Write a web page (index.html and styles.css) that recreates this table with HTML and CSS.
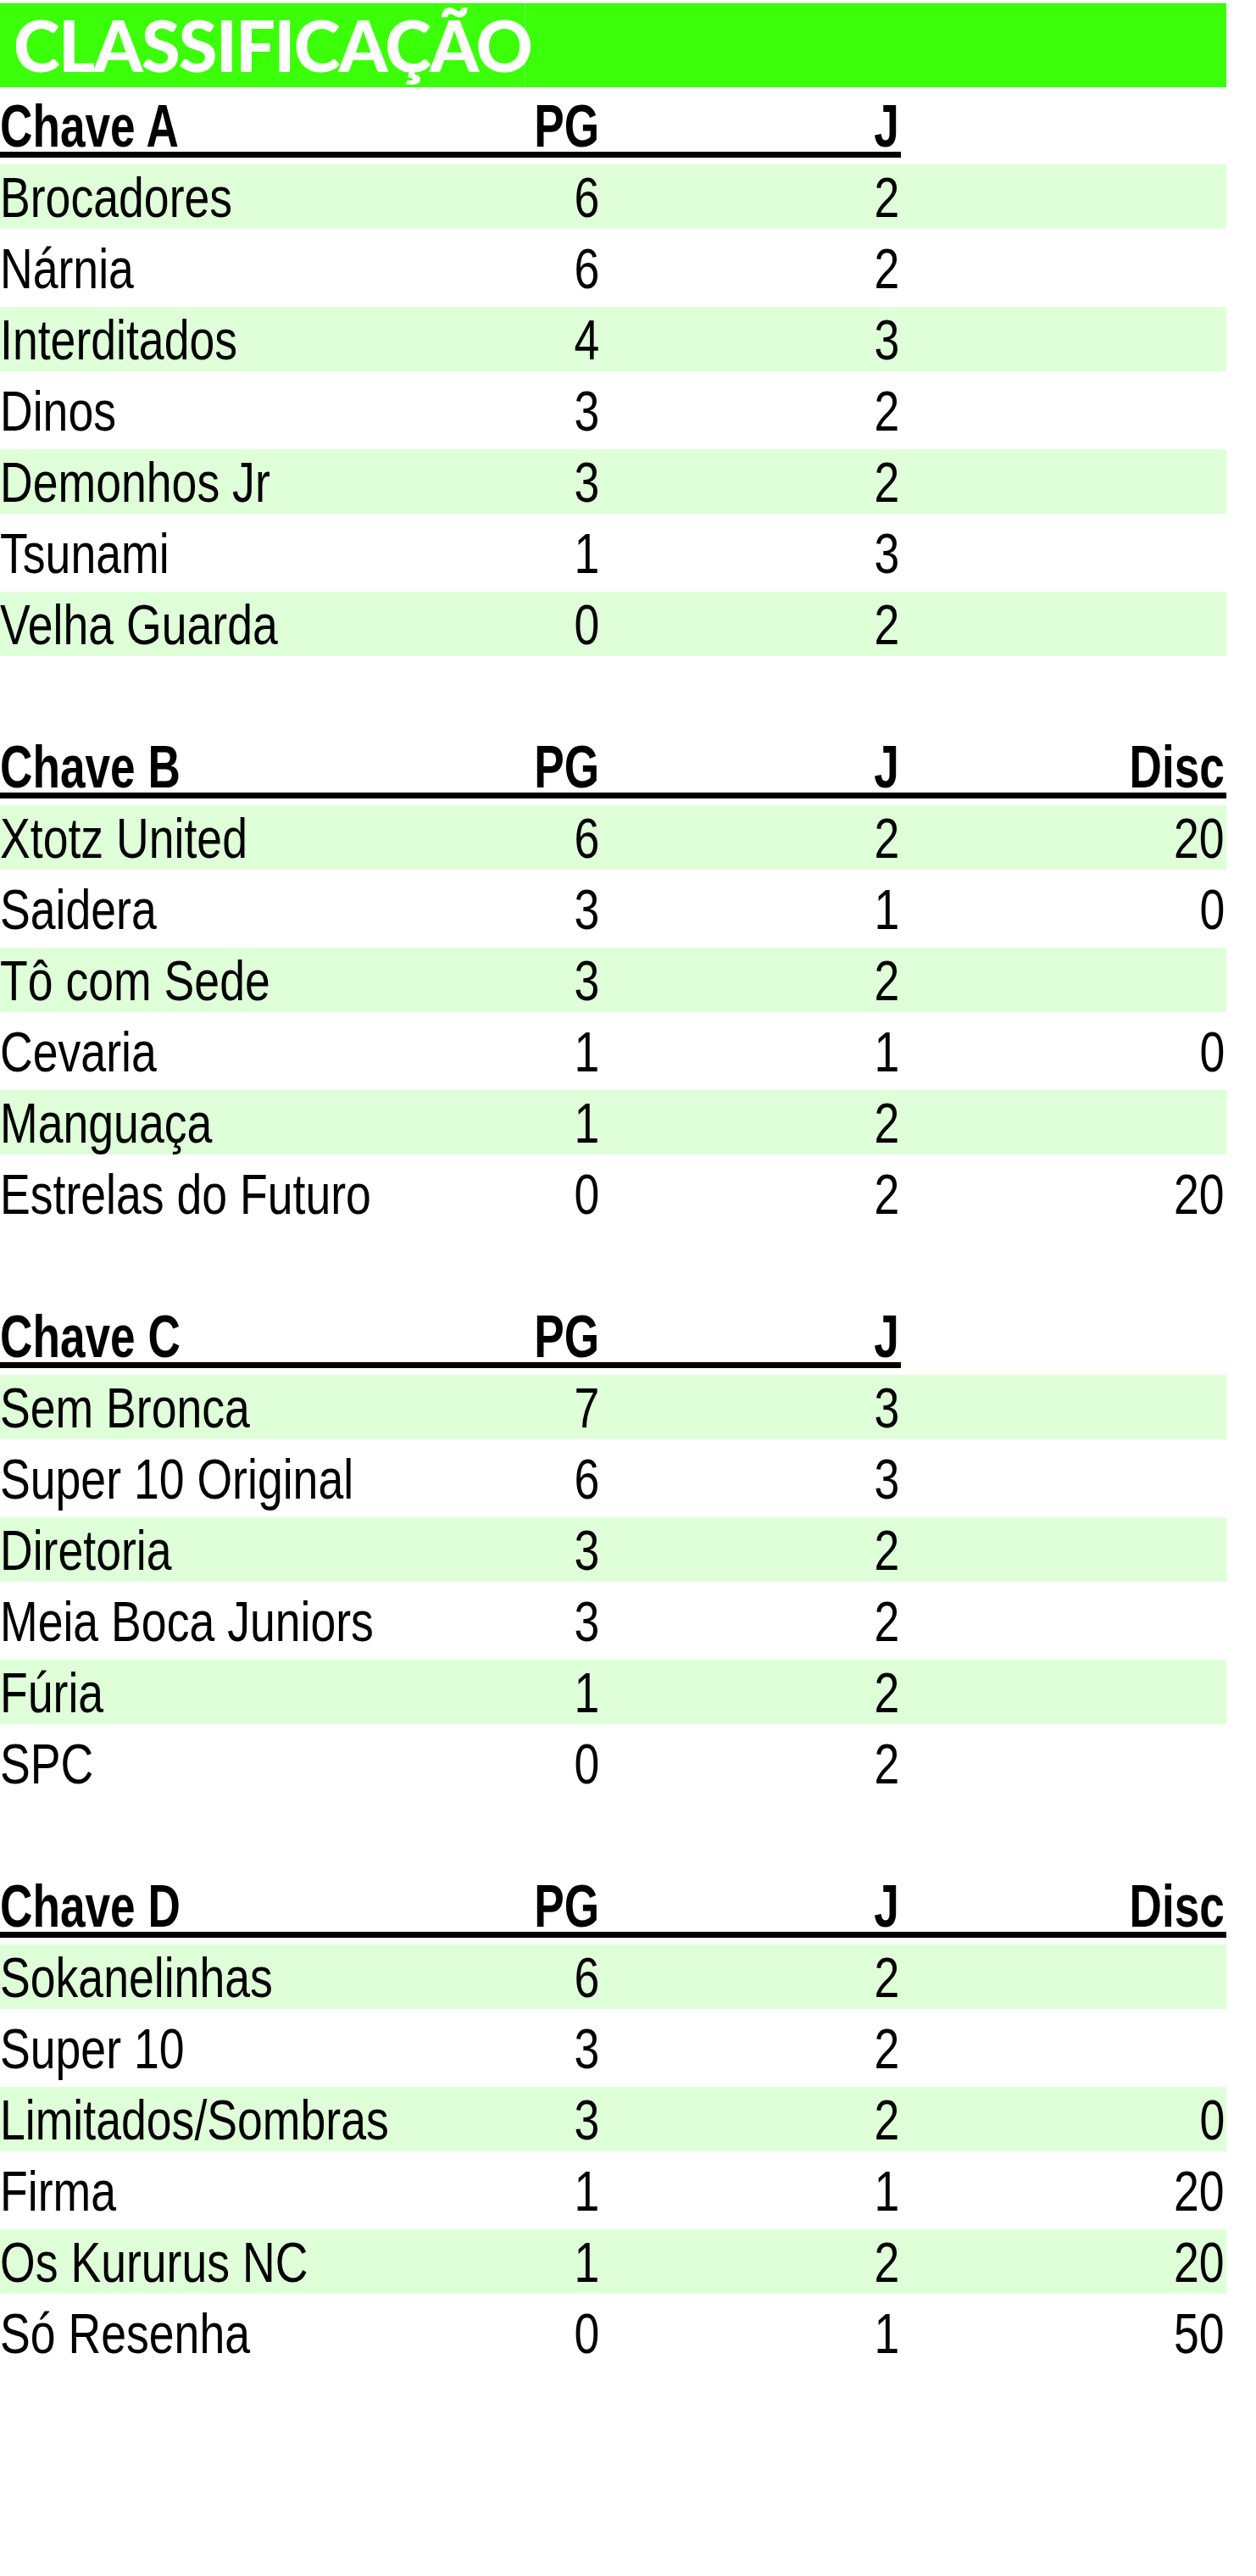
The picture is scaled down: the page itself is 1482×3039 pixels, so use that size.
FILE: index.html
```html
<!DOCTYPE html>
<html lang="pt">
<head>
<meta charset="utf-8">
<title>Classificação</title>
<link rel="stylesheet" href="styles.css">
</head>
<body>
<div class="sheet">
  <div class="title"><span class="title-text">CLASSIFICAÇÃO</span></div>

  <div class="section">
    <div class="head"><div class="hc name"><span class="t">Chave A</span></div><div class="hc num"><span class="t">PG</span></div><div class="hc num"><span class="t">J</span></div><div class="hc empty"></div></div>
    <div class="row alt"><div class="c name"><span class="t">Brocadores</span></div><div class="c num"><span class="t">6</span></div><div class="c num"><span class="t">2</span></div><div class="c num"></div></div>
    <div class="row"><div class="c name"><span class="t">Nárnia</span></div><div class="c num"><span class="t">6</span></div><div class="c num"><span class="t">2</span></div><div class="c num"></div></div>
    <div class="row alt"><div class="c name"><span class="t">Interditados</span></div><div class="c num"><span class="t">4</span></div><div class="c num"><span class="t">3</span></div><div class="c num"></div></div>
    <div class="row"><div class="c name"><span class="t">Dinos</span></div><div class="c num"><span class="t">3</span></div><div class="c num"><span class="t">2</span></div><div class="c num"></div></div>
    <div class="row alt"><div class="c name"><span class="t">Demonhos Jr</span></div><div class="c num"><span class="t">3</span></div><div class="c num"><span class="t">2</span></div><div class="c num"></div></div>
    <div class="row"><div class="c name"><span class="t">Tsunami</span></div><div class="c num"><span class="t">1</span></div><div class="c num"><span class="t">3</span></div><div class="c num"></div></div>
    <div class="row alt"><div class="c name"><span class="t">Velha Guarda</span></div><div class="c num"><span class="t">0</span></div><div class="c num"><span class="t">2</span></div><div class="c num"></div></div>
  </div>

  <div class="section">
    <div class="head"><div class="hc name"><span class="t">Chave B</span></div><div class="hc num"><span class="t">PG</span></div><div class="hc num"><span class="t">J</span></div><div class="hc num"><span class="t">Disc</span></div></div>
    <div class="row alt"><div class="c name"><span class="t">Xtotz United</span></div><div class="c num"><span class="t">6</span></div><div class="c num"><span class="t">2</span></div><div class="c num"><span class="t">20</span></div></div>
    <div class="row"><div class="c name"><span class="t">Saidera</span></div><div class="c num"><span class="t">3</span></div><div class="c num"><span class="t">1</span></div><div class="c num"><span class="t">0</span></div></div>
    <div class="row alt"><div class="c name"><span class="t">Tô com Sede</span></div><div class="c num"><span class="t">3</span></div><div class="c num"><span class="t">2</span></div><div class="c num"></div></div>
    <div class="row"><div class="c name"><span class="t">Cevaria</span></div><div class="c num"><span class="t">1</span></div><div class="c num"><span class="t">1</span></div><div class="c num"><span class="t">0</span></div></div>
    <div class="row alt"><div class="c name"><span class="t">Manguaça</span></div><div class="c num"><span class="t">1</span></div><div class="c num"><span class="t">2</span></div><div class="c num"></div></div>
    <div class="row"><div class="c name"><span class="t">Estrelas do Futuro</span></div><div class="c num"><span class="t">0</span></div><div class="c num"><span class="t">2</span></div><div class="c num"><span class="t">20</span></div></div>
  </div>

  <div class="section">
    <div class="head"><div class="hc name"><span class="t">Chave C</span></div><div class="hc num"><span class="t">PG</span></div><div class="hc num"><span class="t">J</span></div><div class="hc empty"></div></div>
    <div class="row alt"><div class="c name"><span class="t">Sem Bronca</span></div><div class="c num"><span class="t">7</span></div><div class="c num"><span class="t">3</span></div><div class="c num"></div></div>
    <div class="row"><div class="c name"><span class="t">Super 10 Original</span></div><div class="c num"><span class="t">6</span></div><div class="c num"><span class="t">3</span></div><div class="c num"></div></div>
    <div class="row alt"><div class="c name"><span class="t">Diretoria</span></div><div class="c num"><span class="t">3</span></div><div class="c num"><span class="t">2</span></div><div class="c num"></div></div>
    <div class="row"><div class="c name"><span class="t">Meia Boca Juniors</span></div><div class="c num"><span class="t">3</span></div><div class="c num"><span class="t">2</span></div><div class="c num"></div></div>
    <div class="row alt"><div class="c name"><span class="t">Fúria</span></div><div class="c num"><span class="t">1</span></div><div class="c num"><span class="t">2</span></div><div class="c num"></div></div>
    <div class="row"><div class="c name"><span class="t">SPC</span></div><div class="c num"><span class="t">0</span></div><div class="c num"><span class="t">2</span></div><div class="c num"></div></div>
  </div>

  <div class="section">
    <div class="head"><div class="hc name"><span class="t">Chave D</span></div><div class="hc num"><span class="t">PG</span></div><div class="hc num"><span class="t">J</span></div><div class="hc num"><span class="t">Disc</span></div></div>
    <div class="row alt"><div class="c name"><span class="t">Sokanelinhas</span></div><div class="c num"><span class="t">6</span></div><div class="c num"><span class="t">2</span></div><div class="c num"></div></div>
    <div class="row"><div class="c name"><span class="t">Super 10</span></div><div class="c num"><span class="t">3</span></div><div class="c num"><span class="t">2</span></div><div class="c num"></div></div>
    <div class="row alt"><div class="c name"><span class="t">Limitados/Sombras</span></div><div class="c num"><span class="t">3</span></div><div class="c num"><span class="t">2</span></div><div class="c num"><span class="t">0</span></div></div>
    <div class="row"><div class="c name"><span class="t">Firma</span></div><div class="c num"><span class="t">1</span></div><div class="c num"><span class="t">1</span></div><div class="c num"><span class="t">20</span></div></div>
    <div class="row alt"><div class="c name"><span class="t">Os Kururus NC</span></div><div class="c num"><span class="t">1</span></div><div class="c num"><span class="t">2</span></div><div class="c num"><span class="t">20</span></div></div>
    <div class="row"><div class="c name"><span class="t">Só Resenha</span></div><div class="c num"><span class="t">0</span></div><div class="c num"><span class="t">1</span></div><div class="c num"><span class="t">50</span></div></div>
  </div>
</div>
</body>
</html>
```
FILE: styles.css
```css
html, body {
  margin: 0;
  padding: 0;
  background: #ffffff;
}

.sheet {
  width: 1447px;
  font-family: "Liberation Sans", Arial, sans-serif;
  color: #000000;
}

.title {
  margin-top: 3px;
  border-top: 1px solid #d8d8d8;
  height: 100px;
  margin-bottom: 3px;
  background: linear-gradient(to right, #3cff0a 0, #3cff0a 619px, #6aff48 619px, #6aff48 620px, #3cff0a 620px);
  padding-left: 16px;
  box-sizing: border-box;
}

.title-text {
  font-family: Lato, "Open Sans", sans-serif;
  font-weight: 900;
  font-size: 83px;
  line-height: 98px;
  color: #ffffff;
  letter-spacing: -1.8px;
  white-space: nowrap;
}

.section {
  margin-bottom: 84px;
}

.head,
.row {
  display: grid;
  grid-template-columns: 560px 149px 354px 384px;
}

.head {
  height: 84px;
}

.hc {
  font-weight: 700;
  font-size: 70px;
  line-height: 70px;
  height: 65px;
  padding-top: 8px;
  border-bottom: 7px solid #000000;
  white-space: nowrap;
}

.hc.empty {
  border-bottom: none;
}

.row {
  height: 84px;
  box-sizing: border-box;
  border-top: 4px solid #ffffff;
  border-bottom: 4px solid #ffffff;
}

.row.alt {
  background: #dfffd9;
}

.c {
  font-size: 67px;
  line-height: 77px;
  white-space: nowrap;
}

.t {
  display: inline-block;
}

.name .t {
  transform-origin: left center;
}

.num .t {
  transform-origin: right center;
}

.c .t {
  transform: scaleX(0.8);
}

.hc .t {
  transform: scaleX(0.76);
}

.name {
  text-align: left;
}

.num {
  text-align: right;
  padding-right: 2px;
}
```
